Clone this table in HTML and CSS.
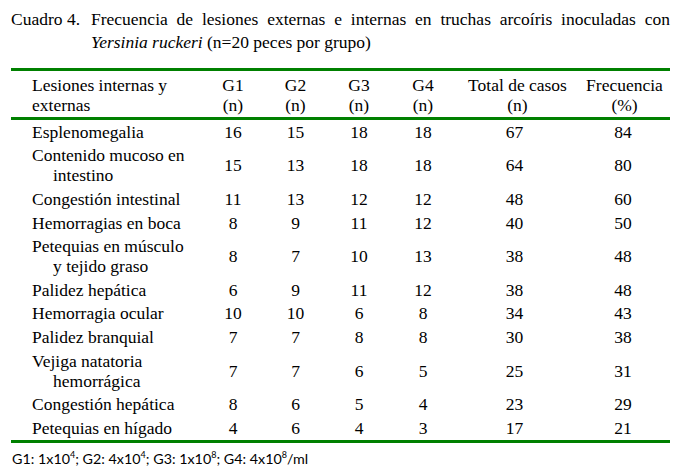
FILE: index.html
```html
<!DOCTYPE html>
<html lang="es">
<head>
<meta charset="utf-8">
<title>Cuadro 4</title>
<link rel="stylesheet" href="styles.css">
</head>
<body>
<div class="page">
  <div class="caption">
    <span class="label">Cuadro 4.</span>
    <div class="caption-text">
      <span class="line1">Frecuencia de lesiones externas e internas en truchas arcoíris inoculadas con</span>
      <span class="line2"><i>Yersinia ruckeri</i> (n=20 peces por grupo)</span>
    </div>
  </div>
  <table class="data">
    <colgroup>
      <col class="c-name"><col class="c-g1"><col class="c-g2"><col class="c-g3"><col class="c-g4"><col class="c-total"><col class="c-freq">
    </colgroup>
    <thead>
      <tr>
        <th class="name-h">Lesiones internas y<br>externas</th>
        <th>G1<br>(n)</th>
        <th>G2<br>(n)</th>
        <th>G3<br>(n)</th>
        <th>G4<br>(n)</th>
        <th>Total de casos<br>(n)</th>
        <th>Frecuencia<br>(%)</th>
      </tr>
    </thead>
    <tbody>
      <tr><td class="name">Esplenomegalia</td><td>16</td><td>15</td><td>18</td><td>18</td><td class="t">67</td><td class="f">84</td></tr>
      <tr><td class="name">Contenido mucoso en<br>intestino</td><td>15</td><td>13</td><td>18</td><td>18</td><td class="t">64</td><td class="f">80</td></tr>
      <tr><td class="name">Congestión intestinal</td><td>11</td><td>13</td><td>12</td><td>12</td><td class="t">48</td><td class="f">60</td></tr>
      <tr><td class="name">Hemorragias en boca</td><td>8</td><td>9</td><td>11</td><td>12</td><td class="t">40</td><td class="f">50</td></tr>
      <tr><td class="name">Petequias en músculo<br>y tejido graso</td><td>8</td><td>7</td><td>10</td><td>13</td><td class="t">38</td><td class="f">48</td></tr>
      <tr><td class="name">Palidez hepática</td><td>6</td><td>9</td><td>11</td><td>12</td><td class="t">38</td><td class="f">48</td></tr>
      <tr><td class="name">Hemorragia ocular</td><td>10</td><td>10</td><td>6</td><td>8</td><td class="t">34</td><td class="f">43</td></tr>
      <tr><td class="name">Palidez branquial</td><td>7</td><td>7</td><td>8</td><td>8</td><td class="t">30</td><td class="f">38</td></tr>
      <tr><td class="name">Vejiga natatoria<br>hemorrágica</td><td>7</td><td>7</td><td>6</td><td>5</td><td class="t">25</td><td class="f">31</td></tr>
      <tr><td class="name">Congestión hepática</td><td>8</td><td>6</td><td>5</td><td>4</td><td class="t">23</td><td class="f">29</td></tr>
      <tr class="last"><td class="name">Petequias en hígado</td><td>4</td><td>6</td><td>4</td><td>3</td><td class="t">17</td><td class="f">21</td></tr>
    </tbody>
  </table>
  <p class="note">G1: 1x10<sup>4</sup>; G2: 4x10<sup>4</sup>; G3: 1x10<sup>8</sup>; G4: 4x10<sup>8</sup>/ml</p>
</div>
</body>
</html>
```

FILE: styles.css
```css
html, body {
  margin: 0;
  padding: 0;
  background: #ffffff;
}
.page {
  width: 681px;
  height: 468px;
  color: #000;
  font-family: "Liberation Serif", "Times New Roman", serif;
  font-size: 17.5px;
}
.caption {
  display: flex;
  padding: 8px 11px 0 11px;
  line-height: 23px;
}
.label {
  width: 80px;
  flex: none;
  white-space: nowrap;
}
.caption-text {
  flex: 1;
  display: flex;
  flex-direction: column;
}
.line1 {
  display: block;
  text-align: justify;
  text-align-last: justify;
}
.line2 {
  display: block;
}
.data {
  margin: 14px 0 0 11px;
  width: 659px;
  border-collapse: separate;
  border-spacing: 0;
  table-layout: fixed;
  font-family: "Liberation Serif", "Times New Roman", serif;
  font-size: 17.5px;
}
.c-name { width: 192px; }
.c-g1 { width: 60px; }
.c-g2 { width: 65px; }
.c-g3 { width: 62px; }
.c-g4 { width: 66px; }
.c-total { width: 123px; }
.c-freq { width: 91px; }
.data th {
  font-weight: normal;
  text-align: center;
  line-height: 20px;
  padding: 4px 0 2px;
  border-top: 3px solid #008000;
  border-bottom: 3px solid #008000;
  vertical-align: middle;
}
.data th.name-h {
  text-align: left;
  padding-left: 21px;
}
.data td {
  text-align: center;
  line-height: 20px;
  padding: 1.85px 0 1.75px;
  vertical-align: middle;
}
.data tr.last td {
  border-bottom: 3px solid #008000;
}
.data td.name {
  text-align: left;
  padding-left: 42px;
  text-indent: -21px;
}
.data td.t { padding-right: 6px; }
.data td.f { padding-right: 3px; }
.note {
  margin: 7px 0 0 12px;
  font-family: Lato, "Liberation Sans", sans-serif;
  font-size: 14.3px;
  line-height: 18px;
}
.note sup {
  font-size: 9px;
  vertical-align: 6px;
  line-height: 0;
}
```
